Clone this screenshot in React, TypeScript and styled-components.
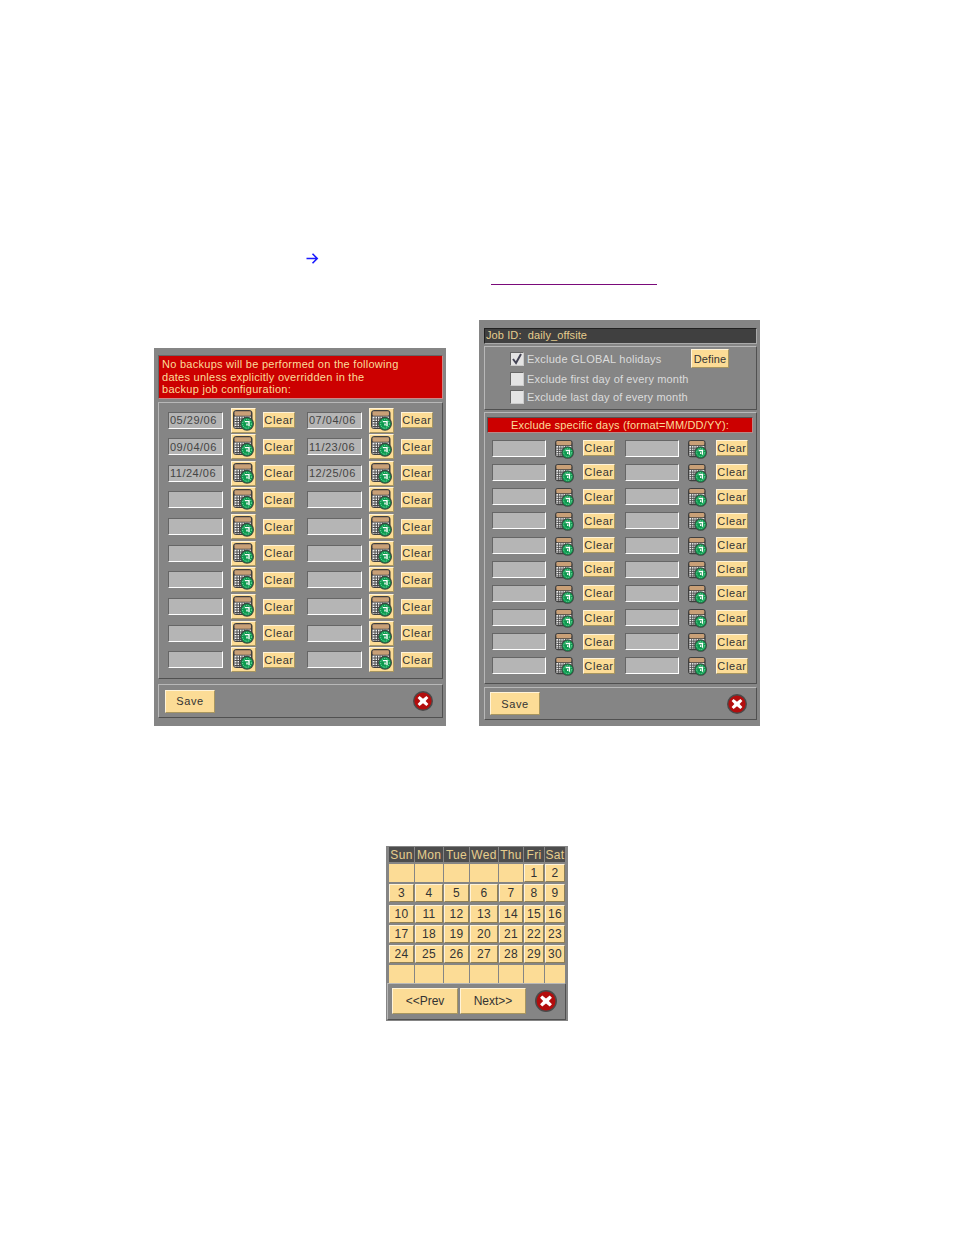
import React from 'react';
import styled, { createGlobalStyle } from 'styled-components';

const GlobalStyle = createGlobalStyle`
  html, body {
    margin: 0;
    background: #fff;
  }
  body {
    font-family: 'Liberation Sans', Arial, sans-serif;
  }
`;

const CalendarIcon = ({ size = 21 }: { size?: number }) => (
  <svg width={size} height={size} viewBox="0 0 21 21">
    <rect x="0" y="0" width="19.5" height="19" rx="3.5" fill="#3f3f3f" />
    <rect x="1.5" y="1.2" width="16.5" height="4.6" rx="1.2" fill="#c9a077" />
    <rect x="1.5" y="6.6" width="16.5" height="11" fill="#f2f2f2" />
    <path
      d="M1.5 9h16M1.5 11.5h16M1.5 14h16M1.5 16.5h16M4 6.6v11M6.5 6.6v11M9 6.6v11M11.5 6.6v11"
      stroke="#4a4a4a"
      strokeWidth="1"
    />
    <circle cx="14" cy="13.8" r="7" fill="#3c4a42" />
    <circle cx="14" cy="13.8" r="5.8" fill="#0b9a4e" />
    <circle cx="14" cy="13.8" r="4.4" fill="none" stroke="#8fe0b4" strokeWidth="1" strokeDasharray="1.2 1.2" />
    <path d="M11.8 11.6h4.2v4.6M14 13.6v2" fill="none" stroke="#fff" strokeWidth="1.4" />
  </svg>
);

const CloseIcon = ({ size = 20 }: { size?: number }) => (
  <svg width={size} height={size} viewBox="0 0 20 20">
    <circle cx="10" cy="10" r="10" fill="#4a4a4a" />
    <circle cx="10" cy="10" r="8.6" fill="#b30d0d" />
    <path d="M6.6 5 10 7.8 13.4 5 15.4 7 12.6 10 15.4 13 13.4 15 10 12.2 6.6 15 4.6 13 7.4 10 4.6 7Z" fill="#fff" />
  </svg>
);

const Page = styled.div`
  width: 954px;
  height: 1235px;
  padding-top: 252px;
  box-sizing: border-box;
  overflow: hidden;
`;

const ArrowRow = styled.div`
  height: 13px;
  padding-left: 306px;
  display: flex;
  align-items: center;
  color: #1a1aff;
`;

const LinkLine = styled.a`
  display: block;
  width: 166px;
  height: 1px;
  margin: 19px 0 0 491px;
  background: #7a0a7a;
`;

const Panels = styled.div`
  display: flex;
  align-items: flex-end;
  gap: 33px;
  margin: 35px 0 0 154px;
`;

const Panel = styled.div<{ $width: number }>`
  width: ${(p) => p.$width}px;
  box-sizing: border-box;
  background: #858585;
  display: flex;
  flex-direction: column;
`;

const LeftPanel = styled(Panel)`
  padding: 7px 3px 8px 4px;
`;

const RightPanel = styled(Panel)`
  padding: 8px 3px 6px 5px;
`;

const Banner = styled.div`
  height: 44px;
  box-sizing: border-box;
  padding: 2px 3px;
  background: #cc0000;
  border: 1px solid;
  border-color: #666 #c88 #c88 #666;
  color: #fbdc9a;
  font-size: 11px;
  line-height: 12.5px;
  letter-spacing: 0.27px;
`;

const Section = styled.div<{ $height: number }>`
  height: ${(p) => p.$height}px;
  box-sizing: border-box;
  border: 1px solid;
  border-color: #b8b8b8 #505050 #505050 #b8b8b8;
`;

const DateRow = styled.div<{ $height: number; $gap: number }>`
  height: ${(p) => p.$height}px;
  display: flex;
  align-items: center;
  gap: ${(p) => p.$gap}px;
`;

const Field = styled.div<{ $iconGap: number; $clearGap: number }>`
  display: flex;
  align-items: center;
  gap: ${(p) => p.$iconGap}px;
  & > :last-child {
    margin-left: ${(p) => p.$clearGap - p.$iconGap}px;
  }
`;

const DateInput = styled.input<{ $width: number }>`
  width: ${(p) => p.$width}px;
  height: 17px;
  box-sizing: border-box;
  padding: 0 1px;
  background: #b5b5b5;
  border: 1px solid;
  border-color: #666 #fff #fff #666;
  border-radius: 0;
  outline: none;
  color: #444;
  font-family: 'Liberation Sans', Arial, sans-serif;
  font-size: 11px;
  letter-spacing: 0.5px;
`;

const Bevel = styled.button`
  box-sizing: border-box;
  padding: 0;
  margin: 0;
  background: #fcdc96;
  border: 1px solid;
  border-color: #fff3d8 #a89660 #a89660 #fff3d8;
  border-radius: 0;
  color: #333;
  font-family: 'Liberation Sans', Arial, sans-serif;
  font-size: 11px;
  letter-spacing: 0.6px;
  display: flex;
  align-items: center;
  justify-content: center;
`;

const IconButton = styled(Bevel)`
  width: 25px;
  height: 25px;
`;

const PlainIcon = styled.span`
  width: 19px;
  height: 19px;
  display: flex;
  transform: translateY(1px);
`;

const ClearButton = styled(Bevel)`
  width: 32px;
  height: 16px;
`;

const Footer = styled(Section)`
  display: flex;
  align-items: center;
  justify-content: space-between;
`;

const SaveButton = styled(Bevel)`
  width: 50px;
  height: 23px;
`;

const CloseSlot = styled.span`
  display: flex;
`;

const LeftBody = styled(Section)`
  margin-top: 3px;
  padding: 3.7px 0 0 9px;
`;

const LeftFooter = styled(Footer)`
  margin-top: 5px;
  padding: 0 9px 0 6px;
`;

const JobHeader = styled.div`
  height: 16px;
  box-sizing: border-box;
  padding-left: 1px;
  background: #404040;
  border: 1px solid;
  border-color: #222 #aaa #aaa #222;
  color: #e6cd8e;
  font-size: 11px;
  line-height: 12px;
  letter-spacing: 0.1px;
  white-space: pre;
`;

const Options = styled(Section)`
  margin-top: 2px;
  padding: 2px 0 0 25px;
`;

const OptionRow = styled.div<{ $height: number }>`
  height: ${(p) => p.$height}px;
  display: flex;
  align-items: center;
  color: #dcdcdc;
  font-size: 11px;
  letter-spacing: 0.16px;
`;

const CheckBox = styled.span`
  width: 14px;
  height: 14px;
  box-sizing: border-box;
  margin-right: 3px;
  background: #e4e4e4;
  border: 1px solid;
  border-color: #666 #ccc #ccc #666;
  display: flex;
  align-items: center;
  justify-content: center;
`;

const OptionLabel = styled.span`
  flex: 0 0 164px;
  letter-spacing: 0.23px;
`;

const DefineButton = styled(Bevel)`
  width: 38px;
  height: 19px;
  margin-top: -1px;
  letter-spacing: 0.1px;
`;

const RightBody = styled(Section)`
  margin-top: 2px;
  padding: 4px 0 0 2px;
`;

const RedBar = styled.div`
  height: 16px;
  margin-right: 3px;
  box-sizing: border-box;
  background: #cc0000;
  border: 1px solid;
  border-color: #555 #b88 #b88 #555;
  color: #fbdc9a;
  font-size: 11px;
  line-height: 14px;
  letter-spacing: 0.17px;
  text-align: center;
`;

const RightRows = styled.div`
  margin-top: 3.2px;
  padding-left: 5px;
`;

const RightFooter = styled(Footer)`
  margin-top: 3px;
  padding: 0 9px 0 5px;
`;

const Calendar = styled.div`
  width: 182px;
  height: 175px;
  box-sizing: border-box;
  margin: 120px 0 0 386px;
  padding: 1px 2px 1px 1px;
  background: #858585;
`;

const CalGrid = styled.div`
  display: grid;
  padding-left: 2px;
  grid-template-columns: 25px 28px 25px 28px 24px 20px 20px;
  grid-template-rows: 15px repeat(6, 18px);
  column-gap: 1px;
  row-gap: 2.2px;
`;

const DayHead = styled.div`
  background: #4d4d4d;
  color: #e6cd8e;
  font-size: 12px;
  line-height: 16px;
  letter-spacing: 0.3px;
  text-align: center;
  white-space: nowrap;
`;

const DayCell = styled.div<{ $filled: boolean }>`
  box-sizing: border-box;
  background: #fcdc96;
  color: #333;
  font-size: 12px;
  line-height: 16px;
  letter-spacing: 0.3px;
  text-align: center;
  border: 1px solid;
  border-color: ${(p) => (p.$filled ? '#fff3d8 #8f7f55 #8f7f55 #fff3d8' : '#fcdc96')};
`;

const CalFooter = styled.div`
  height: 37px;
  box-sizing: border-box;
  border: 1px solid;
  border-color: #b8b8b8 #505050 #505050 #b8b8b8;
  padding: 0 0 2px 4px;
  display: flex;
  align-items: center;
`;

const NavButton = styled(Bevel)`
  width: 66px;
  height: 26px;
  margin-right: 2px;
  font-size: 12px;
  letter-spacing: 0;
`;

const CalClose = styled.span`
  display: flex;
  margin-left: 7px;
`;

const leftDates = ['05/29/06', '07/04/06', '09/04/06', '11/23/06', '11/24/06', '12/25/06'];
const weekDays = ['Sun', 'Mon', 'Tue', 'Wed', 'Thu', 'Fri', 'Sat'];
const days: string[] = [
  ...Array(5).fill(''),
  ...Array.from({ length: 30 }, (_, i) => String(i + 1)),
  ...Array(7).fill(''),
];

const App = () => (
  <Page>
    <GlobalStyle />
    <ArrowRow>
      <svg width="13" height="13" viewBox="0 0 13 13">
        <path d="M0.5 6.5h10.5M6.5 1.8l4.7 4.7-4.7 4.7" fill="none" stroke="currentColor" strokeWidth="1.6" />
      </svg>
    </ArrowRow>
    <LinkLine />
    <Panels>
      <LeftPanel $width={292}>
        <Banner>
          No backups will be performed on the following
          <br />
          dates unless explicitly overridden in the
          <br />
          backup job configuration:
        </Banner>
        <LeftBody $height={277}>
          {Array.from({ length: 10 }, (_, row) => (
            <DateRow key={row} $height={26.67} $gap={12}>
              {[0, 1].map((col) => (
                <Field key={col} $iconGap={col === 0 ? 8 : 7} $clearGap={7}>
                  <DateInput $width={55} readOnly value={leftDates[row * 2 + col] ?? ''} />
                  <IconButton>
                    <CalendarIcon />
                  </IconButton>
                  <ClearButton>Clear</ClearButton>
                </Field>
              ))}
            </DateRow>
          ))}
        </LeftBody>
        <LeftFooter $height={34}>
          <SaveButton>Save</SaveButton>
          <CloseSlot>
            <CloseIcon />
          </CloseSlot>
        </LeftFooter>
      </LeftPanel>
      <RightPanel $width={281}>
        <JobHeader>Job ID:  daily_offsite</JobHeader>
        <Options $height={64}>
          <OptionRow $height={20}>
            <CheckBox>
              <svg width="12" height="12" viewBox="0 0 12 12">
                <path d="M2 6l3 4 5-9" fill="none" stroke="#445" strokeWidth="2" />
              </svg>
            </CheckBox>
            <OptionLabel>Exclude GLOBAL holidays</OptionLabel>
            <DefineButton>Define</DefineButton>
          </OptionRow>
          <OptionRow $height={19}>
            <CheckBox />
            Exclude first day of every month
          </OptionRow>
          <OptionRow $height={18}>
            <CheckBox />
            Exclude last day of every month
          </OptionRow>
        </Options>
        <RightBody $height={272}>
          <RedBar>Exclude specific days (format=MM/DD/YY):</RedBar>
          <RightRows>
            {Array.from({ length: 10 }, (_, row) => (
              <DateRow key={row} $height={24.2} $gap={10}>
                {[0, 1].map((col) => (
                  <Field key={col} $iconGap={9} $clearGap={9}>
                    <DateInput $width={54} readOnly value="" />
                    <PlainIcon>
                      <CalendarIcon size={19} />
                    </PlainIcon>
                    <ClearButton>Clear</ClearButton>
                  </Field>
                ))}
              </DateRow>
            ))}
          </RightRows>
        </RightBody>
        <RightFooter $height={33}>
          <SaveButton>Save</SaveButton>
          <CloseSlot>
            <CloseIcon />
          </CloseSlot>
        </RightFooter>
      </RightPanel>
    </Panels>
    <Calendar>
      <CalGrid>
        {weekDays.map((d) => (
          <DayHead key={d}>{d}</DayHead>
        ))}
        {days.map((d, i) => (
          <DayCell key={i} $filled={d !== ''}>
            {d}
          </DayCell>
        ))}
      </CalGrid>
      <CalFooter>
        <NavButton>&lt;&lt;Prev</NavButton>
        <NavButton>Next&gt;&gt;</NavButton>
        <CalClose>
          <CloseIcon size={22} />
        </CalClose>
      </CalFooter>
    </Calendar>
  </Page>
);

export default App;
